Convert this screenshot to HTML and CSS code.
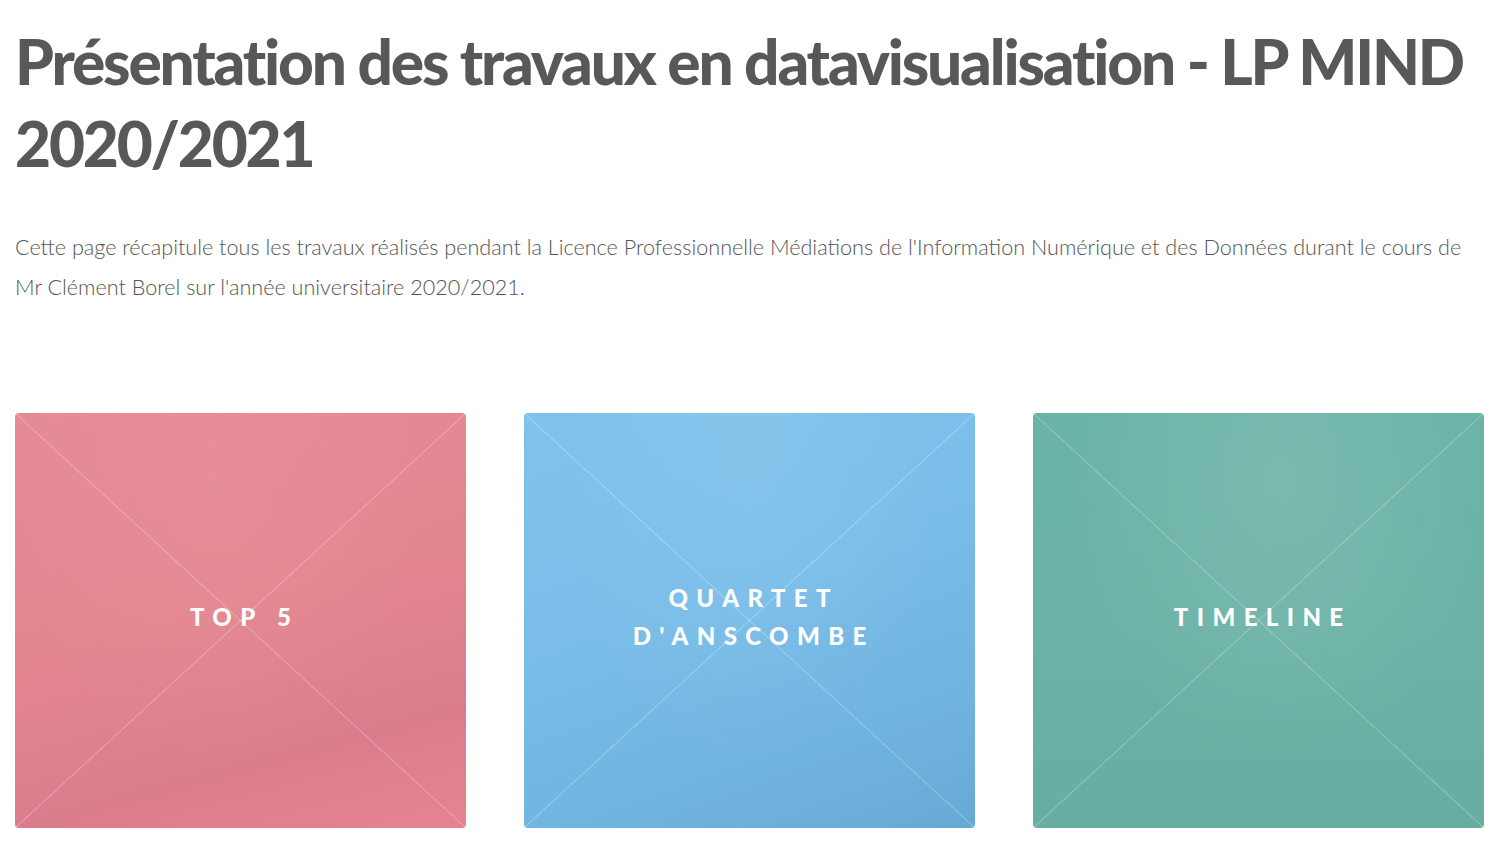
FILE: index.html
```html
<!DOCTYPE html>
<html lang="fr">
<head>
<meta charset="utf-8">
<title>Présentation des travaux en datavisualisation - LP MIND 2020/2021</title>
<link rel="stylesheet" href="styles.css">
</head>
<body>
<main class="page">
  <header class="intro">
    <h1 class="title">Présentation des travaux en datavisualisation - LP MIND 2020/2021</h1>
    <p class="lead">Cette page récapitule tous les travaux réalisés pendant la Licence Professionnelle Médiations de l'Information Numérique et des Données durant le cours de Mr Clément Borel sur l'année universitaire 2020/2021.</p>
  </header>
  <section class="tiles">
    <a class="tile tile-pink" href="#"><span class="label">Top 5</span></a>
    <a class="tile tile-blue" href="#"><span class="label">Quartet<br>d'Anscombe</span></a>
    <a class="tile tile-green" href="#"><span class="label">Timeline</span></a>
  </section>
</main>
</body>
</html>
```
FILE: styles.css
```css
* { box-sizing: border-box; }
html, body { margin: 0; padding: 0; background: #fff; }
body { font-family: Lato, "Open Sans", sans-serif; color: #585858; }
.page { width: 1469px; margin-left: 15px; }
.title {
  margin: 20px 0 0 0;
  font-weight: 900;
  font-size: 62.2px;
  line-height: 82px;
  letter-spacing: -0.035em;
  color: #585858;
}
.lead {
  margin: 43px 0 0 0;
  font-weight: 300;
  font-size: 21.6px;
  line-height: 40px;
  color: #555;
}
.tiles {
  margin-top: 106px;
  display: grid;
  grid-template-columns: repeat(3, 451px);
  gap: 58px;
}
.tile {
  height: 415px;
  border-radius: 4px;
  display: flex;
  align-items: center;
  justify-content: center;
  text-decoration: none;
  text-align: center;
}
.tile-pink {
  background:
    linear-gradient(to top right, transparent calc(50% - 1px), rgba(255,255,255,.28) 50%, transparent calc(50% + 1px)),
    linear-gradient(to top left, transparent calc(50% - 1px), rgba(255,255,255,.28) 50%, transparent calc(50% + 1px)),
    radial-gradient(ellipse at 45% 20%, rgba(255,255,255,.05), transparent 60%),
    linear-gradient(165deg, #e68a98 0%, #e4868f 45%, #db7c8d 78%, #e6838f 100%);
}
.tile-blue {
  background:
    linear-gradient(to top right, transparent calc(50% - 1px), rgba(255,255,255,.28) 50%, transparent calc(50% + 1px)),
    linear-gradient(to top left, transparent calc(50% - 1px), rgba(255,255,255,.28) 50%, transparent calc(50% + 1px)),
    radial-gradient(ellipse at 50% 10%, rgba(255,255,255,.08), transparent 60%),
    linear-gradient(160deg, #80c2ec 0%, #78bde8 45%, #70b4e0 75%, #66a9d4 100%);
}
.tile-green {
  background:
    linear-gradient(to top right, transparent calc(50% - 1px), rgba(255,255,255,.28) 50%, transparent calc(50% + 1px)),
    linear-gradient(to top left, transparent calc(50% - 1px), rgba(255,255,255,.28) 50%, transparent calc(50% + 1px)),
    radial-gradient(ellipse at 55% 15%, rgba(255,255,255,.10), transparent 60%),
    linear-gradient(180deg, #6bb3a7 0%, #6cb2a6 50%, #68ada1 100%);
}
.label {
  color: #fff;
  font-weight: 900;
  font-size: 24px;
  line-height: 38px;
  letter-spacing: 0.35em;
  text-transform: uppercase;
  padding-left: 0.35em;
  margin-bottom: 7px;
}
```
